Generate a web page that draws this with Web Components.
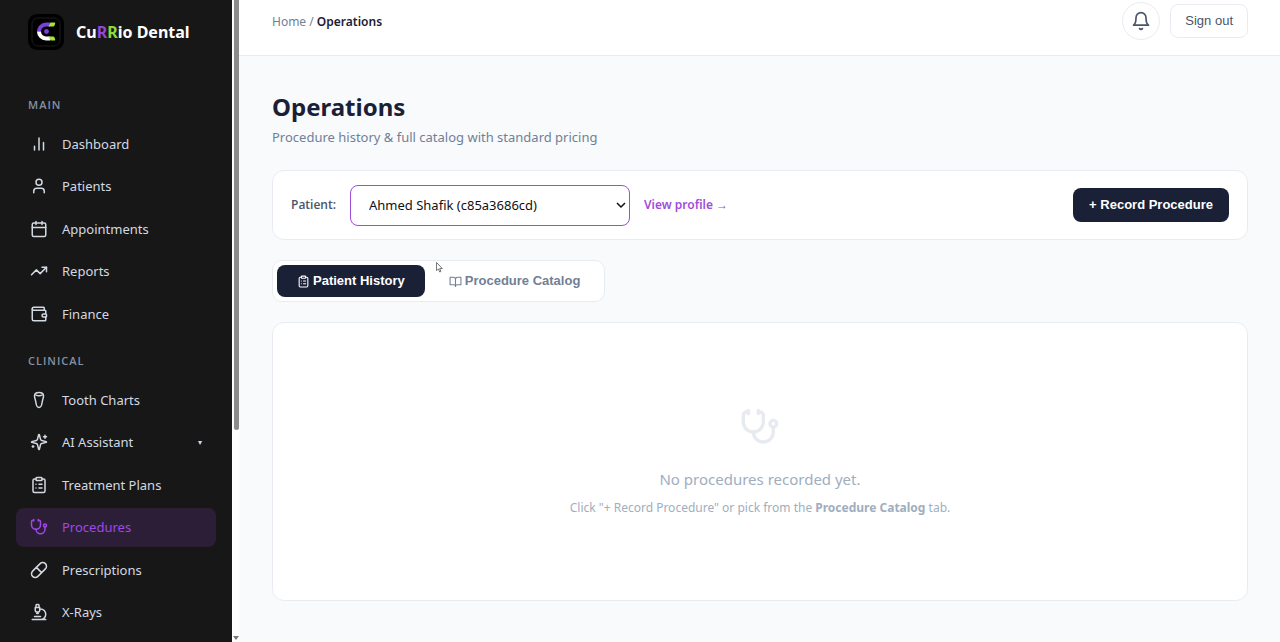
<!DOCTYPE html>
<html lang="en">
<head>
<meta charset="utf-8">
<meta name="viewport" content="width=device-width, initial-scale=1">
<title>CuRRio Dental – Operations</title>
<style>
  html, body { margin: 0; height: 100%; }
  body {
    --ink: #1a2035;
    --muted: #718096;
    --faint: #a0aec0;
    --line: #e8ecf2;
    --accent: #9f4ddb;
    --ui: "Noto Sans", "Open Sans", sans-serif;
    --caps: "Open Sans", "Noto Sans", sans-serif;
    --button: "Liberation Sans", Arial, sans-serif;
    font: 13px/20px var(--ui);
    color: var(--ink);
    background: #f8fafc;
    overflow: hidden;
  }
</style>
</head>
<body>
<app-shell>
  <side-nav slot="nav">
    <nav-section heading="Main" style="--rows: 209px">
      <nav-item icon="bars">Dashboard</nav-item>
      <nav-item icon="user">Patients</nav-item>
      <nav-item icon="calendar">Appointments</nav-item>
      <nav-item icon="trend">Reports</nav-item>
      <nav-item icon="wallet">Finance</nav-item>
    </nav-section>
    <nav-section heading="Clinical" style="--rows: 252px">
      <nav-item icon="tooth">Tooth Charts</nav-item>
      <nav-item icon="sparkles" expandable>AI Assistant</nav-item>
      <nav-item icon="clipboard">Treatment Plans</nav-item>
      <nav-item icon="stethoscope" active>Procedures</nav-item>
      <nav-item icon="pill">Prescriptions</nav-item>
      <nav-item icon="microscope">X-Rays</nav-item>
    </nav-section>
  </side-nav>
  <top-bar slot="top"></top-bar>
  <page-heading>
    <span slot="title">Operations</span>
    Procedure history &amp; full catalog with standard pricing
  </page-heading>
  <patient-bar></patient-bar>
  <view-tabs></view-tabs>
  <empty-state icon="stethoscope">
    <span slot="title">No procedures recorded yet.</span>
    Click "+ Record Procedure" or pick from the <b>Procedure Catalog</b> tab.
  </empty-state>
</app-shell>

<script>
const ICONS = {
  bars: '<path d="M6 20v-5M12 20V4M18 20V10"/>',
  user: '<path d="M19 21v-2a4 4 0 0 0-4-4H9a4 4 0 0 0-4 4v2"/><circle cx="12" cy="7" r="4"/>',
  calendar: '<path d="M8 2v4M16 2v4M3 10h18"/><rect x="3" y="4" width="18" height="18" rx="2"/>',
  trend: '<path d="M22 7l-8.5 8.5-5-5L2 17"/><path d="M16 7h6v6"/>',
  wallet: '<path d="M19 7V4a1 1 0 0 0-1-1H5a2 2 0 0 0 0 4h15a1 1 0 0 1 1 1v4h-3a2 2 0 0 0 0 4h3a1 1 0 0 0 1-1v-2a1 1 0 0 0-1-1"/><path d="M3 5v14a2 2 0 0 0 2 2h15a1 1 0 0 0 1-1v-4"/>',
  tooth: '<path d="M12 2c-3.5 0-6 1.500-6 4.500 0 3 1.500 5.500 2 9.500.4 3.200.8 6 4 6s3.600-2.800 4-6c.5-4 2-6.500 2-9.500C18 3.500 15.500 2 12 2z"/><path d="M8 5.500c2.500 1.200 5.500 1.200 8 0"/>',
  sparkles: '<path d="M9.937 15.500A2 2 0 0 0 8.500 14.063l-6.135-1.582a.5.5 0 0 1 0-.962L8.500 9.936A2 2 0 0 0 9.937 8.500l1.582-6.135a.5.5 0 0 1 .963 0L14.063 8.500A2 2 0 0 0 15.500 9.937l6.135 1.581a.5.5 0 0 1 0 .964L15.500 14.063a2 2 0 0 0-1.437 1.437l-1.582 6.135a.5.5 0 0 1-.963 0z"/><path d="M20 3v4M22 5h-4M4 17v2M5 18H3"/>',
  clipboard: '<rect x="8" y="2" width="8" height="4" rx="1"/><path d="M16 4h2a2 2 0 0 1 2 2v14a2 2 0 0 1-2 2H6a2 2 0 0 1-2-2V6a2 2 0 0 1 2-2h2M12 11h4M12 16h4M8 11h.01M8 16h.01"/>',
  stethoscope: '<path d="M11 2v2M5 2v2M5 3H4a2 2 0 0 0-2 2v4a6 6 0 0 0 12 0V5a2 2 0 0 0-2-2h-1"/><path d="M8 15a6 6 0 0 0 12 0v-3"/><circle cx="20" cy="10" r="2"/>',
  pill: '<path d="M10.500 20.500l10-10a4.950 4.950 0 1 0-7-7l-10 10a4.950 4.950 0 1 0 7 7zM8.500 8.500l7 7"/>',
  microscope: '<path d="M6 18h8M3 22h18M14 22a7 7 0 1 0 0-14h-1M9 14h2M9 12a2 2 0 0 1-2-2V6h6v4a2 2 0 0 1-2 2zM12 6V3a1 1 0 0 0-1-1H9a1 1 0 0 0-1 1v3"/>',
  book: '<path d="M2 4h6a4 4 0 0 1 4 4v13a3 3 0 0 0-3-3H2zM22 4h-6a4 4 0 0 0-4 4v13a3 3 0 0 1 3-3h7z"/>',
  bell: '<path d="M18 8A6 6 0 0 0 6 8c0 7-3 9-3 9h18s-3-2-3-9"/><path d="M13.730 21a2 2 0 0 1-3.460 0"/>'
};

function define(name, render) {
  customElements.define(name, class extends HTMLElement {
    constructor() {
      super();
      this.attachShadow({ mode: 'open' });
    }
    connectedCallback() {
      this.shadowRoot.innerHTML = '<style>:host, * { box-sizing: border-box; }</style>' + render(this);
    }
  });
}

define('ui-icon', el => `
  <style>
    :host { display: inline-flex; flex: none; width: 18px; height: 18px; }
    svg { width: 100%; height: 100%; fill: none; stroke: currentColor; stroke-width: 2; stroke-linecap: round; stroke-linejoin: round; }
  </style>
  <svg viewBox="0 0 24 24" aria-hidden="true">${ICONS[el.getAttribute('name')]}</svg>`);

define('app-shell', () => `
  <style>
    :host { display: grid; grid-template-columns: 239px minmax(0, 1fr); height: 100vh; }
    .page { min-width: 0; overflow: hidden; }
    main { display: flex; flex-direction: column; padding: 32px 32px 32px 33px; }
  </style>
  <slot name="nav"></slot>
  <div class="page">
    <slot name="top"></slot>
    <main><slot></slot></main>
  </div>`);

define('side-nav', () => `
  <style>
    :host { display: flex; height: 100vh; overflow: hidden; }
    .panel { flex: 1; background: #171717; overflow: hidden; }
    .brand { display: flex; align-items: center; gap: 12px; padding: 14px 28px 0; color: #fff; font: 700 16px/24px var(--ui); text-decoration: none; }
    .brand svg { width: 36px; height: 36px; flex: none; }
    .brand span { white-space: nowrap; }
    .p { color: #8f47dc; }
    .g { color: #92d83c; }
    nav { display: flex; flex-direction: column; gap: 19px; padding: 46px 16px 0; }
    .track { display: flex; flex-direction: column; justify-content: space-between; align-items: center; width: 7px; background: #fcfcfc; border-left: 1px solid #fff; }
    .thumb { width: 5px; height: 67%; background: #8b8b8b; border-radius: 0 0 3px 3px; }
    .down { border: 3px solid transparent; border-top: 4px solid #777; border-bottom: 0; margin-bottom: 2px; }
  </style>
  <div class="panel">
    <a class="brand" href="#home">
      <svg viewBox="0 0 36 36" aria-hidden="true">
        <rect width="36" height="36" rx="9" fill="#000"/>
        <rect x="4" y="4" width="28" height="28" rx="6" fill="none" stroke="#1c1c1c"/>
        <g fill="none" stroke-width="4">
          <path d="M11 17.500A7 7 0 0 1 18 10.500h4" stroke="#7c3fe0"/>
          <path d="M11 17.500A7 7 0 0 0 18 24.500h4" stroke="#fff"/>
        </g>
        <path d="M20.500 12.500l2-4h4q1 0 .7 1l-.7 2q-.4 1-1.400 1zM20.500 22.500l2 4h4q1 0 .7-1l-.7-2q-.4-1-1.400-1z" fill="#a3e635"/>
        <circle cx="18.500" cy="17.500" r="2.400" fill="#7c3fe0"/>
      </svg>
      <span>Cu<span class="p">R</span><span class="g">R</span>io Dental</span>
    </a>
    <nav aria-label="Primary"><slot></slot></nav>
  </div>
  <div class="track" aria-hidden="true"><div class="thumb"></div><div class="down"></div></div>`);

define('nav-section', el => `
  <style>
    :host { display: block; }
    h2 { margin: 0 0 10px; padding: 0 12px; font: 600 11px/18px var(--caps); letter-spacing: 1px; text-transform: uppercase; color: #8491a5; }
    .list { display: flex; flex-direction: column; justify-content: space-between; min-height: var(--rows); }
  </style>
  <h2>${el.getAttribute('heading')}</h2>
  <div class="list"><slot></slot></div>`);

define('nav-item', el => `
  <style>
    :host { display: block; color: #d3d9e2; }
    :host([active]) { color: #9f47e8; }
    a { display: flex; align-items: center; gap: 14px; height: 39px; padding: 0 14px; border-radius: 8px; color: inherit; text-decoration: none; font: 13px/20px var(--ui); }
    :host([active]) a { background: #2d1e38; }
    .label { flex: 1; white-space: nowrap; }
    .caret { font-size: 8px; }
  </style>
  <a href="#" ${el.hasAttribute('active') ? 'aria-current="page"' : ''}>
    <ui-icon name="${el.getAttribute('icon')}"></ui-icon>
    <span class="label"><slot></slot></span>
    ${el.hasAttribute('expandable') ? '<span class="caret">▾</span>' : ''}
  </a>`);

define('top-bar', () => `
  <style>
    :host { display: flex; align-items: flex-start; justify-content: space-between; height: 56px; padding: 2px 32px 0 33px; background: #fff; border-bottom: 1px solid var(--line); }
    .crumbs { padding-top: 10px; font: 12px/20px var(--ui); color: var(--muted); }
    .crumbs a { color: inherit; text-decoration: none; }
    .crumbs b { font-weight: 600; color: var(--ink); }
    .actions { display: flex; align-items: center; gap: 10px; }
    button { border: 1px solid var(--line); background: #fff; color: #4a5568; font: 13px/18px var(--button); }
    .bell { display: flex; align-items: center; justify-content: center; width: 38px; height: 38px; border-radius: 50%; padding: 0; }
    .bell ui-icon { width: 20px; height: 20px; }
    .out { height: 34px; padding: 0 14px; border-radius: 8px; }
  </style>
  <div class="crumbs"><a href="#home">Home</a> / <b>Operations</b></div>
  <div class="actions">
    <button class="bell" aria-label="Notifications"><ui-icon name="bell"></ui-icon></button>
    <button class="out">Sign out</button>
  </div>`);

define('page-heading', () => `
  <style>
    :host { display: block; margin-bottom: 22px; }
    h1 { margin: 0; font: 700 24px/38px var(--ui); color: var(--ink); }
    p { margin: 0; font: 13px/22px var(--ui); color: var(--muted); }
  </style>
  <h1><slot name="title"></slot></h1>
  <p><slot></slot></p>`);

define('patient-bar', () => `
  <style>
    :host { display: flex; align-items: center; gap: 14px; height: 70px; margin-bottom: 20px; padding: 0 18px; background: #fff; border: 1px solid var(--line); border-radius: 12px; }
    label { font: 600 12px/20px var(--caps); color: #4a5568; }
    .field { position: relative; width: 280px; height: 41px; }
    select { appearance: none; width: 100%; height: 100%; padding: 0 18px; border: 1px solid var(--accent); border-radius: 8px; background: #fff; color: #111; font: 13px/20px var(--ui); outline: 0; }
    svg { position: absolute; right: 4px; top: 16px; width: 10px; height: 8px; fill: none; stroke: #111; stroke-width: 1.5; pointer-events: none; }
    a { font: 600 12px/20px var(--ui); color: var(--accent); text-decoration: none; }
    button { margin-left: auto; height: 34px; padding: 0 16px; border: 0; border-radius: 8px; background: var(--ink); color: #fff; font: 700 13px/18px var(--button); }
  </style>
  <label for="patient">Patient:</label>
  <div class="field">
    <select id="patient"><option>Ahmed Shafik (c85a3686cd)</option></select>
    <svg viewBox="0 0 10 8" aria-hidden="true"><path d="M1 2l4 4 4-4"/></svg>
  </div>
  <a href="#profile">View profile →</a>
  <button>+ Record Procedure</button>`);

define('view-tabs', () => `
  <style>
    :host { position: relative; display: flex; align-self: flex-start; gap: 4px; margin-bottom: 20px; padding: 4px; background: #fff; border: 1px solid var(--line); border-radius: 10px; }
    button { display: flex; align-items: center; gap: 3px; height: 32px; padding: 0 20px; border: 0; border-radius: 8px; background: none; color: var(--muted); font: 700 13px/18px var(--button); }
    button[aria-selected="true"] { background: var(--ink); color: #fff; }
    ui-icon { width: 13px; height: 13px; }
    .pointer { position: absolute; left: 163px; top: 1px; width: 7px; height: 11px; pointer-events: none; }
  </style>
  <button role="tab" aria-selected="true"><ui-icon name="clipboard"></ui-icon>Patient History</button>
  <button role="tab" aria-selected="false"><ui-icon name="book"></ui-icon>Procedure Catalog</button>
  <svg class="pointer" viewBox="0 0 7 11" aria-hidden="true"><path d="M.5.5v8l2-1.500 1.200 3 1.200-.5-1.200-3h2.600z" fill="#fff" stroke="#555" stroke-width=".8"/></svg>`);

define('empty-state', el => `
  <style>
    :host { display: flex; flex-direction: column; align-items: center; padding: 84px 24px 82px; background: #fff; border: 1px solid var(--line); border-radius: 12px; text-align: center; color: var(--faint); }
    ui-icon { width: 40px; height: 40px; color: #e7eaf0; }
    h3 { margin: 20px 0 7px; font: 400 15px/24px var(--ui); }
    p { margin: 0; font: 12px/20px var(--ui); }
  </style>
  <ui-icon name="${el.getAttribute('icon')}"></ui-icon>
  <h3><slot name="title"></slot></h3>
  <p><slot></slot></p>`);
</script>
</body>
</html>
